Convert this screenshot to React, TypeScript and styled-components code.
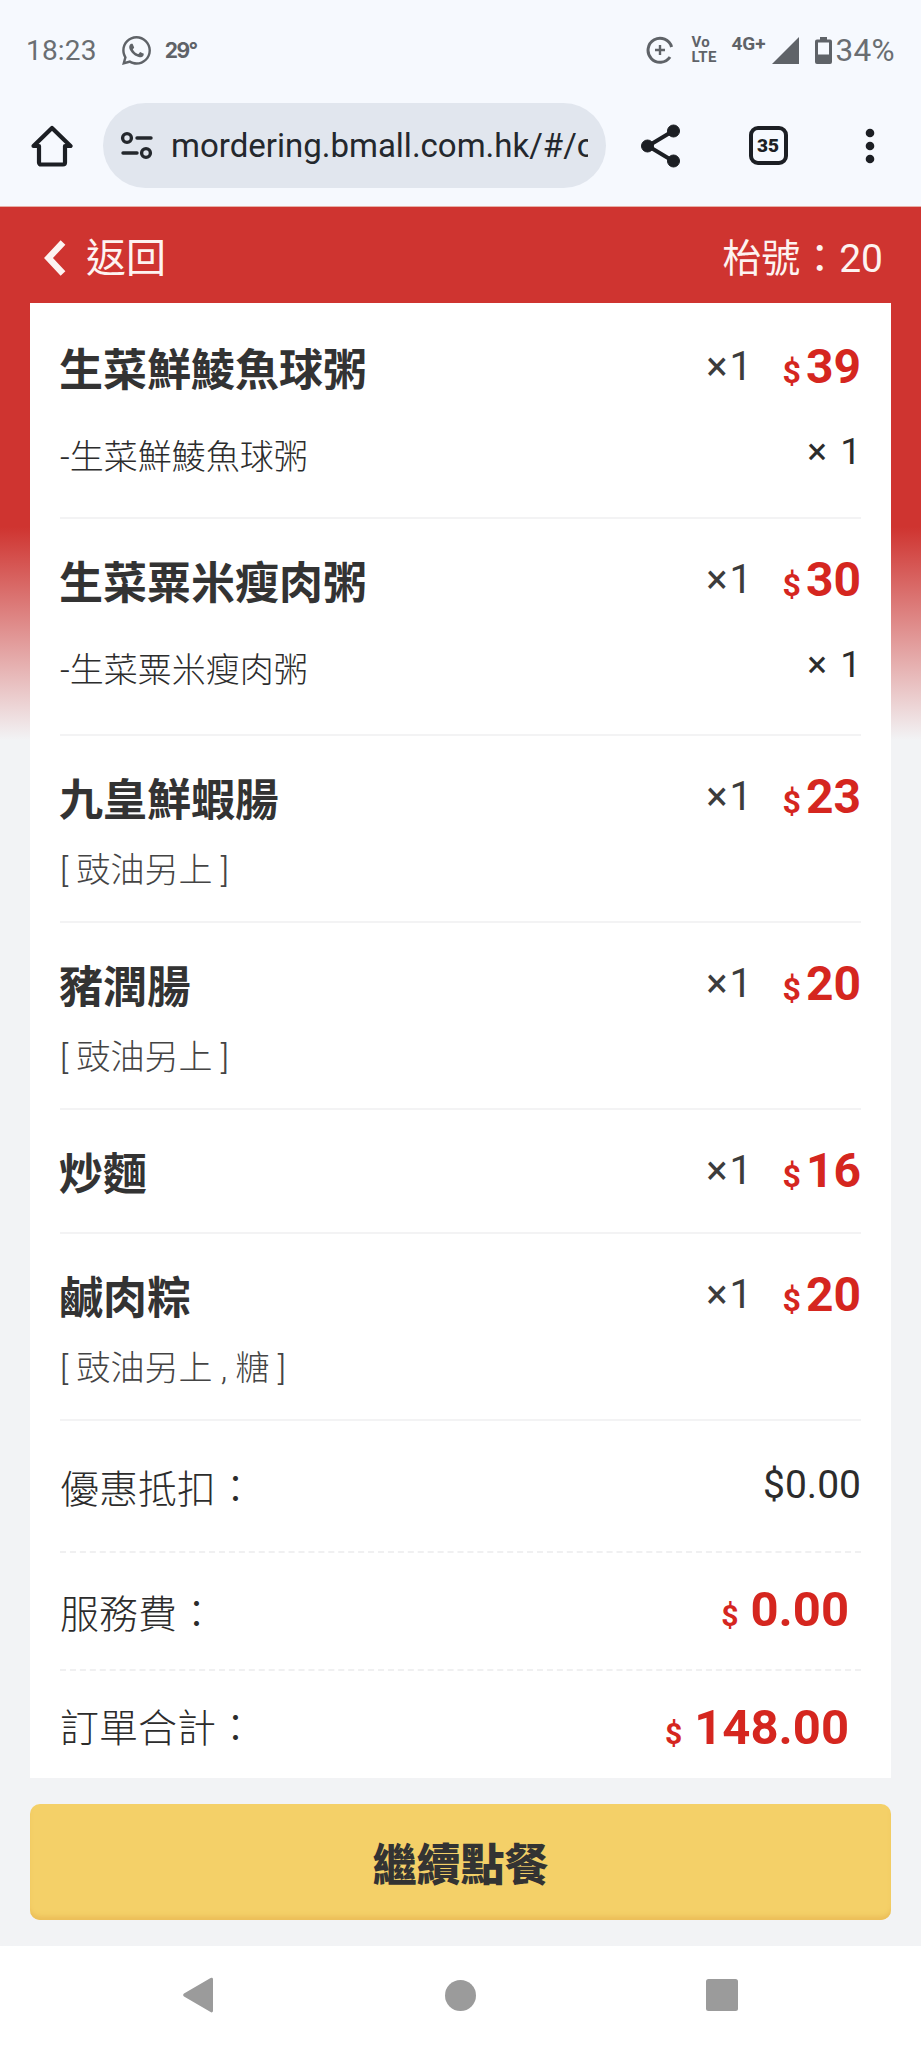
import React from "react";
import styled, { createGlobalStyle } from "styled-components";
import { FaWhatsapp } from "react-icons/fa";

const Global = createGlobalStyle`
  html, body { margin: 0; padding: 0; background: #f2f3f5; }
  body { font-family: Roboto, "Noto Sans CJK TC", sans-serif; }
  * { box-sizing: border-box; }
`;

const CJK = `Roboto, "Noto Sans CJK TC", sans-serif`;

const Screen = styled.div`
  width: 921px;
  height: 2048px;
  display: flex;
  flex-direction: column;
  overflow: hidden;
  background: #f2f3f5;
`;

const Chrome = styled.header`
  height: 207px;
  background: #f6f9fe;
  display: flex;
  flex-direction: column;
`;

const StatusBar = styled.div`
  height: 100px;
  padding: 0 26px;
  display: flex;
  align-items: center;
  justify-content: space-between;
  color: #5f6368;
`;

const StatusGroup = styled.div`
  display: flex;
  align-items: center;
`;

const StatusText = styled.span`
  font-family: Roboto, sans-serif;
  font-size: 28px;
  letter-spacing: 0.2px;
  color: #6a6e72;
`;

const BatteryText = styled(StatusText)`
  font-size: 31.5px;
  letter-spacing: 0.3px;
  margin-left: 4px;
`;

const Temperature = styled.span`
  font-family: Inter, sans-serif;
  font-size: 21px;
  font-weight: 700;
  letter-spacing: -1.5px;
  color: #5f6368;
  margin-left: 12px;
`;

const WhatsApp = styled(FaWhatsapp)`
  width: 33px;
  height: 33px;
  margin-left: 23px;
  color: #5f6368;
`;

const VoLte = styled.span`
  display: flex;
  flex-direction: column;
  font-family: Roboto, sans-serif;
  font-size: 15px;
  line-height: 15px;
  font-weight: 700;
  letter-spacing: 0.4px;
  margin-left: 17px;
  width: 30px;
  color: #5f6368;
`;

const FourG = styled.span`
  font-family: Roboto, sans-serif;
  font-size: 19px;
  font-weight: 700;
  color: #5f6368;
  margin: -14px 6px 0 10px;
`;

const Toolbar = styled.div`
  height: 106px;
  display: flex;
  align-items: flex-start;
`;

const Slot = styled.div<{ $w: number }>`
  width: ${(p) => p.$w}px;
  height: 85px;
  margin-top: 3px;
  display: flex;
  align-items: center;
  justify-content: center;
  color: #1c1f24;
`;

const Omnibox = styled.div`
  width: 503px;
  height: 85px;
  margin-top: 3px;
  border-radius: 43px;
  background: #e1e6ee;
  padding: 0 18px 0 17px;
  display: flex;
  align-items: center;
  gap: 17px;
`;

const Url = styled.div`
  flex: 1;
  overflow: hidden;
  white-space: nowrap;
  font-family: Roboto, sans-serif;
  font-size: 33px;
  color: #24282d;
`;

const RedLine = styled.div`
  height: 1px;
  background: #e7b0a8;
`;

const Main = styled.main`
  flex: 1;
  display: flex;
  flex-direction: column;
  background: linear-gradient(
    to bottom,
    #cf3430 0,
    #cf3430 320px,
    #f2f3f5 533px
  );
`;

const TopBar = styled.div`
  height: 96px;
  padding: 0 38px 0 44px;
  display: flex;
  align-items: center;
  justify-content: space-between;
  color: #fdf3f1;
  font-family: ${CJK};
  font-size: 39px;
`;

const Back = styled.div`
  display: flex;
  align-items: center;
  gap: 20px;
`;

const BackLabel = styled.span`
  font-size: 40px;
`;

const BackIcon = styled.span`
  display: flex;
  margin-top: 6px;
`;

const Card = styled.section`
  margin: 0 30px;
  height: 1475px;
  padding: 0 30px;
  background: #fff;
  overflow: hidden;
`;

const Item = styled.div<{ $pt: number; $pb: number }>`
  padding: ${(p) => p.$pt}px 0 ${(p) => p.$pb}px;
  border-bottom: 2px solid #f3f3f4;
`;

const ItemHead = styled.div`
  display: flex;
  align-items: flex-start;
  height: 56px;
`;

const Title = styled.div`
  flex: 1;
  margin-left: -1px;
  font-family: ${CJK};
  font-size: 44px;
  line-height: 56px;
  font-weight: 700;
  color: #333;
`;

const Qty = styled.span`
  font-family: Roboto, sans-serif;
  font-size: 40px;
  line-height: 48px;
  letter-spacing: 2px;
  color: #3c3c3c;
`;

const Price = styled.span`
  width: 107px;
  text-align: right;
  white-space: nowrap;
  font-family: Roboto, sans-serif;
  font-weight: 700;
  font-size: 48px;
  line-height: 48px;
  color: #d5261f;
`;

const Dollar = styled.span`
  font-size: 32px;
  margin-right: 5px;
`;

const SubRow = styled.div`
  display: flex;
  justify-content: space-between;
  align-items: center;
  margin-top: 33px;
  height: 44px;
  font-family: ${CJK};
  font-size: 34px;
  font-weight: 300;
  color: #2c2c2c;
`;

const SubQty = styled.span`
  font-family: Roboto, sans-serif;
  font-size: 37px;
  letter-spacing: 2px;
  margin-right: -2px;
  margin-top: -6px;
  font-weight: 400;
`;

const Note = styled.div`
  margin-top: 19px;
  height: 44px;
  line-height: 44px;
  font-family: ${CJK};
  font-size: 34px;
  font-weight: 300;
  color: #444;
`;

const Summary = styled.div<{ $h: number; $line?: boolean }>`
  height: ${(p) => p.$h}px;
  display: flex;
  align-items: center;
  justify-content: space-between;
  border-bottom: ${(p) => (p.$line ? "2px dashed #f0f0f1" : "none")};
  font-family: ${CJK};
  font-size: 39px;
  font-weight: 300;
  color: #2c2c2c;
`;

const Plain = styled.span`
  font-family: Roboto, sans-serif;
  font-size: 39px;
  font-weight: 400;
  margin-top: -2px;
`;

const Amount = styled.span<{ $dy: number }>`
  font-family: Roboto, sans-serif;
  font-size: 49px;
  font-weight: 700;
  color: #d5261f;
  margin-right: 12px;
  margin-top: ${(p) => p.$dy}px;
`;

const AmountDollar = styled.span`
  font-size: 30px;
  margin-right: 12px;
`;

const Footer = styled.div`
  padding: 26px 30px 0;
`;

const Continue = styled.button`
  width: 100%;
  height: 116px;
  border: 0;
  border-radius: 10px;
  background: #f4d068;
  box-shadow: inset 0 -5px 4px -1px #ecbf5a;
  font-family: ${CJK};
  font-size: 44px;
  font-weight: 900;
  color: #333;
  padding: 0;
`;

const NavBar = styled.nav`
  height: 102px;
  margin-top: 26px;
  background: #fff;
  display: grid;
  grid-template-columns: repeat(3, 1fr);
  align-items: center;
`;

const NavCell = styled.div<{ $shift: number }>`
  display: flex;
  justify-content: center;
  transform: translate(${(p) => p.$shift}px, -2px);
`;

const SiteControls = () => (
  <svg width="34" height="30" viewBox="0 0 34 30" fill="none" stroke="#24282d" strokeWidth="3.4" strokeLinecap="round">
    <circle cx="7" cy="7" r="4.4" />
    <path d="M17 7h14" />
    <circle cx="26" cy="22" r="4.4" />
    <path d="M3 22h14" />
  </svg>
);

const Home = () => (
  <svg width="42" height="42" viewBox="0 0 42 42" fill="none" stroke="#1c1f24" strokeWidth="4.2" strokeLinejoin="round">
    <path d="M2.5 21 21 3l18.5 18H34v16.5a2 2 0 0 1-2 2H10a2 2 0 0 1-2-2V21z" />
  </svg>
);

const Share = () => (
  <svg width="42" height="44" viewBox="0 0 42 44" fill="#1c1f24" stroke="#1c1f24">
    <path d="M33 7 8 22l25 15" fill="none" strokeWidth="4" />
    <circle cx="33.5" cy="7" r="6" />
    <circle cx="7.5" cy="22" r="6" />
    <circle cx="33.5" cy="37" r="6" />
  </svg>
);

const TabCountFrame = styled.div`
  width: 39px;
  height: 39px;
  border: 4px solid #1c1f24;
  border-radius: 9px;
  display: flex;
  align-items: center;
  justify-content: center;
  font-family: Roboto, sans-serif;
  font-size: 19px;
  font-weight: 900;
  color: #1c1f24;
`;

const Dots = () => (
  <svg width="10" height="36" viewBox="0 0 10 36" fill="#1c1f24">
    <circle cx="5" cy="5" r="4.3" />
    <circle cx="5" cy="18" r="4.3" />
    <circle cx="5" cy="31" r="4.3" />
  </svg>
);

const SyncPlus = () => (
  <svg width="28" height="28" viewBox="0 0 28 28" fill="none" stroke="#5f6368" strokeWidth="3">
    <path d="M24 21A12 12 0 1 1 25.6 11" />
    <path d="M14 9v10M9 14h10" strokeWidth="2.4" />
  </svg>
);

const Signal = () => (
  <svg width="27" height="27" viewBox="0 0 27 27" fill="#5f6368">
    <path d="M27 0v27H0z" />
  </svg>
);

const Battery = styled.svg`
  margin-left: 16px;
`;

const Chevron = () => (
  <svg width="22" height="36" viewBox="0 0 22 36" fill="none" stroke="#fdf3f1" strokeWidth="6.5">
    <path d="M19 2.5 4.500 18 19 33.500" />
  </svg>
);

const NavBack = () => (
  <svg width="30" height="36" viewBox="0 0 30 36" fill="#9b9b9b">
    <path d="M30 2v32a1.500 1.500 0 0 1-2.400 1.100L1 19.500a2 2 0 0 1 0-3L27.600 1A1.500 1.500 0 0 1 30 2z" />
  </svg>
);

const NavHome = () => (
  <svg width="31" height="31" viewBox="0 0 31 31" fill="#9b9b9b">
    <circle cx="15.500" cy="15.500" r="15.500" />
  </svg>
);

const NavRecent = () => (
  <svg width="32" height="32" viewBox="0 0 32 32" fill="#9b9b9b">
    <rect width="32" height="32" rx="2.500" />
  </svg>
);

type Row = {
  name: string;
  price: number;
  pt: number;
  pb: number;
  sub?: string;
  note?: string;
};

const rows: Row[] = [
  { name: "生菜鮮鯪魚球粥", price: 39, pt: 40, pb: 41, sub: "-生菜鮮鯪魚球粥" },
  { name: "生菜粟米瘦肉粥", price: 30, pt: 37, pb: 45, sub: "-生菜粟米瘦肉粥" },
  { name: "九皇鮮蝦腸", price: 23, pt: 37, pb: 29, note: "[ 豉油另上 ]" },
  { name: "豬潤腸", price: 20, pt: 37, pb: 29, note: "[ 豉油另上 ]" },
  { name: "炒麵", price: 16, pt: 37, pb: 29 },
  { name: "鹹肉粽", price: 20, pt: 37, pb: 29, note: "[ 豉油另上 , 糖 ]" },
];

export default function App() {
  return (
    <Screen>
      <Global />
      <Chrome>
        <StatusBar>
          <StatusGroup>
            <StatusText>18:23</StatusText>
            <WhatsApp />
            <Temperature>29°</Temperature>
          </StatusGroup>
          <StatusGroup>
            <SyncPlus />
            <VoLte>
              <span>Vo</span>
              <span>LTE</span>
            </VoLte>
            <FourG>4G+</FourG>
            <Signal />
            <Battery width="17" height="27" viewBox="0 0 17 27">
              <path d="M5 0h7v2.500h3a2 2 0 0 1 2 2V25a2 2 0 0 1-2 2H2a2 2 0 0 1-2-2V4.500a2 2 0 0 1 2-2h3z" fill="#5f6368" />
              <rect x="3" y="5.500" width="11" height="12" fill="#f6f9fe" />
            </Battery>
            <BatteryText>34%</BatteryText>
          </StatusGroup>
        </StatusBar>
        <Toolbar>
          <Slot $w={103}>
            <Home />
          </Slot>
          <Omnibox>
            <SiteControls />
            <Url>mordering.bmall.com.hk/#/o</Url>
          </Omnibox>
          <Slot $w={110}>
            <Share />
          </Slot>
          <Slot $w={104}>
            <TabCountFrame>35</TabCountFrame>
          </Slot>
          <Slot $w={100}>
            <Dots />
          </Slot>
        </Toolbar>
        <RedLine />
      </Chrome>
      <Main>
        <TopBar>
          <Back>
            <BackIcon>
              <Chevron />
            </BackIcon>
            <BackLabel>返回</BackLabel>
          </Back>
          <span>枱號：20</span>
        </TopBar>
        <Card>
          {rows.map((r) => (
            <Item key={r.name} $pt={r.pt} $pb={r.pb}>
              <ItemHead>
                <Title>{r.name}</Title>
                <Qty>×1</Qty>
                <Price>
                  <Dollar>$</Dollar>
                  {r.price}
                </Price>
              </ItemHead>
              {r.sub && (
                <SubRow>
                  <span>{r.sub}</span>
                  <SubQty>× 1</SubQty>
                </SubRow>
              )}
              {r.note && <Note>{r.note}</Note>}
            </Item>
          ))}
          <Summary $h={132} $line>
            <span>優惠抵扣：</span>
            <Plain>$0.00</Plain>
          </Summary>
          <Summary $h={118} $line>
            <span>服務費：</span>
            <Amount $dy={-3}>
              <AmountDollar>$</AmountDollar>0.00
            </Amount>
          </Summary>
          <Summary $h={108}>
            <span>訂單合計：</span>
            <Amount $dy={4}>
              <AmountDollar>$</AmountDollar>148.00
            </Amount>
          </Summary>
        </Card>
        <Footer>
          <Continue>繼續點餐</Continue>
        </Footer>
        <NavBar>
          <NavCell $shift={44}>
            <NavBack />
          </NavCell>
          <NavCell $shift={0}>
            <NavHome />
          </NavCell>
          <NavCell $shift={-46}>
            <NavRecent />
          </NavCell>
        </NavBar>
      </Main>
    </Screen>
  );
}
